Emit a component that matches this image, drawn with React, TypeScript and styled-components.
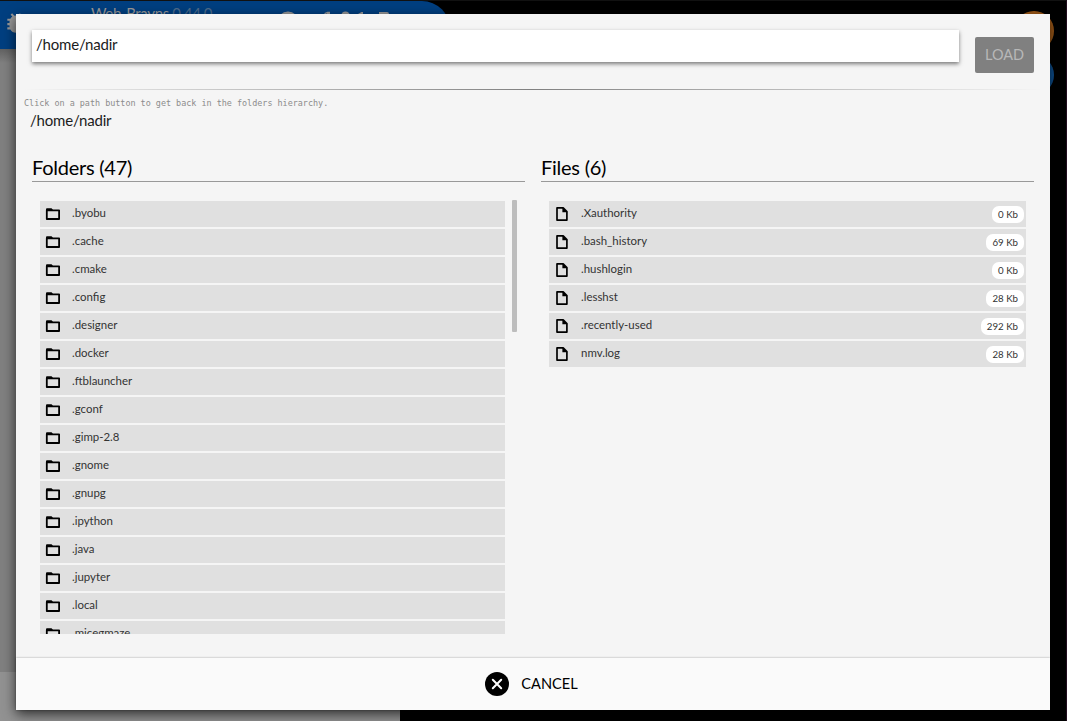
import React from "react";
import styled, { createGlobalStyle } from "styled-components";

const Global = createGlobalStyle`
  * { box-sizing: border-box; }
  html, body, #root { margin: 0; height: 100%; }
  body { background: #000; overflow: hidden; font-family: Lato, "Open Sans", sans-serif; color: #000; }
`;

const Desktop = styled.div`
  position: relative;
  width: 1067px;
  height: 721px;
  overflow: hidden;
  background: #000;
  border-top: 1px solid #111;
  border-right: 1px solid #1f0b1c;
  padding: 13px 16px 10px 16px;
`;

const Sidebar = styled.div`
  position: absolute;
  left: 0;
  top: 48px;
  width: 400px;
  height: 672px;
  background: linear-gradient(#626262, #808080 14px, #808080 623px, #929292 623px);
`;

const TopBar = styled.div`
  position: absolute;
  left: 0;
  top: 0;
  width: 450px;
  height: 48px;
  border-radius: 0 28px 0 0;
  background: #003f80;
  color: #999;
`;

const AppTitle = styled.div`
  position: absolute;
  left: 91px;
  top: 3px;
  font-size: 15px;
  line-height: 18px;
  letter-spacing: -0.35px;
  white-space: nowrap;
  span { opacity: 0.5; }
`;

const BugIcon = styled.svg`
  position: absolute;
  left: 3px;
  top: 9px;
`;

const ToolIcons = styled.svg`
  position: absolute;
  left: 276px;
  top: 9px;
`;

const Orb = styled.div<{ $top: number; $color: string }>`
  position: absolute;
  left: 1014px;
  top: ${(p) => p.$top}px;
  width: 40px;
  height: 40px;
  border-radius: 50%;
  background: ${(p) => p.$color};
`;

const Dialog = styled.div`
  position: relative;
  width: 1034px;
  height: 696px;
  display: flex;
  flex-direction: column;
  background: #f5f5f5;
  box-shadow: 0 4px 12px rgba(0, 0, 0, 0.7);
`;

const Body = styled.div`
  flex: 1;
  min-height: 0;
  display: flex;
  flex-direction: column;
`;

const PathForm = styled.div`
  display: flex;
  padding: 16px 16px 0;
  height: 75px;
  gap: 16px;
`;

const PathInput = styled.div`
  flex: 1;
  height: 32px;
  padding: 4px;
  background: #fff;
  box-shadow: 0 2px 4px rgba(0, 0, 0, 0.5);
  color: #1c1c1c;
  font-size: 15px;
  line-height: 21px;
  letter-spacing: -0.2px;
`;

const LoadButton = styled.div`
  width: 59px;
  height: 36px;
  margin-top: 7px;
  border-radius: 2px;
  background: #808080;
  color: #b8b8b8;
  font-size: 14.500px;
  line-height: 35px;
  text-align: center;
`;

const Divider = styled.div`
  height: 1px;
  margin: 0 8px;
  background: linear-gradient(90deg, transparent, #808080 50%, transparent);
`;

const Hint = styled.div`
  height: 17px;
  padding: 6px 8px 0;
  color: #8c8c8c;
  font-family: "DejaVu Sans Mono", monospace;
  font-size: 8.43px;
  line-height: 14px;
  white-space: nowrap;
`;

const Crumb = styled.div`
  height: 46px;
  padding: 3px 14px;
  color: #1c1c1c;
  font-size: 15px;
  line-height: 21px;
  letter-spacing: -0.2px;
`;

const Columns = styled.div`
  display: grid;
  grid-template-columns: 493px 493px;
  gap: 16px;
  padding: 0 16px;
`;

const Title = styled.div`
  height: 29px;
  border-bottom: 1px solid #999;
  font-size: 20px;
  line-height: 29px;
  letter-spacing: -0.25px;
`;

const Scroller = styled.div`
  height: 434px;
  margin-top: 18px;
  padding: 1px 8px 0;
  overflow: hidden;
  display: flex;
  gap: 7px;
`;

const List = styled.div`
  flex: 1;
  display: flex;
  flex-direction: column;
  gap: 2px;
`;

const Thumb = styled.div`
  width: 5px;
  height: 132px;
  margin-top: -1px;
  border-radius: 1px;
  background: #bdbdbd;
`;

const Row = styled.div`
  flex: none;
  height: 26px;
  display: flex;
  align-items: center;
  padding: 0 2px 0 5px;
  background: #e0e0e0;
  color: #333;
`;

const Name = styled.span`
  flex: 1;
  margin-left: 11px;
  font-size: 11.45px;
  line-height: 24px;
  height: 26px;
`;

const Size = styled.span`
  height: 17px;
  padding: 0 6px;
  border-radius: 7px;
  background: #fff;
  font-size: 9.7px;
  line-height: 16px;
`;

const Footer = styled.div`
  position: relative;
  height: 52px;
  display: flex;
  align-items: center;
  justify-content: center;
  gap: 12px;
  padding-right: 3px;
  background: #fafafa;
  box-shadow: 0 0 2px rgba(0, 0, 0, 0.35);
  font-size: 14.6px;
  line-height: 18px;
  span { margin-top: -1px; }
`;

const FolderIcon = () => (
  <svg width="16" height="16" viewBox="0 0 16 16">
    <path d="M1.8 4.3h12.3v8.7H1.8z" fill="none" stroke="#000" strokeWidth="1.8" strokeLinejoin="round" />
    <path d="M1 4.8V3.3Q1 2.200 2 2.200h4.500l1.500 1.500v1z" fill="#000" />
  </svg>
);

const FileIcon = () => (
  <svg width="16" height="16" viewBox="0 0 16 16">
    <path d="M3 1.9h6.2l3.7 3.7v8.5H3z" fill="none" stroke="#000" strokeWidth="1.7" strokeLinejoin="round" />
    <path d="M8.4 1.5v4.8h4.9z" fill="#000" />
  </svg>
);

const folders = [
  ".byobu", ".cache", ".cmake", ".config", ".designer", ".docker", ".ftblauncher", ".gconf",
  ".gimp-2.8", ".gnome", ".gnupg", ".ipython", ".java", ".jupyter", ".local", ".micegmaze",
];

const files = [
  { name: ".Xauthority", size: "0 Kb" },
  { name: ".bash_history", size: "69 Kb" },
  { name: ".hushlogin", size: "0 Kb" },
  { name: ".lesshst", size: "28 Kb" },
  { name: ".recently-used", size: "292 Kb" },
  { name: "nmv.log", size: "28 Kb" },
];

export default function App() {
  return (
    <>
      <Global />
      <Desktop>
        <Sidebar />
        <TopBar>
          <BugIcon width="26" height="26" viewBox="0 0 24 24" fill="#999">
            <path d="M20 8h-2.800a6 6 0 0 0-1.800-2L17 4.400 15.600 3l-2.200 2.200a6 6 0 0 0-2.800 0L8.400 3 7 4.400 8.600 6a6 6 0 0 0-1.800 2H4v2h2.100L6 11v1H4v2h2v1l.1 1H4v2h2.800a6 6 0 0 0 10.400 0H20v-2h-2.100l.1-1v-1h2v-2h-2v-1l-.1-1H20z" />
          </BugIcon>
          <AppTitle>Web-Brayns <span>0.44.0</span></AppTitle>
          <ToolIcons width="120" height="20" viewBox="0 0 120 20" fill="#999">
            <circle cx="12" cy="12" r="10.500" />
            <path d="M44 4h3v7h-3zM48.500 3l3-1.200h2.500v9h-3V3.500l-2.500.8zM82 4l3.500-2H87v9h-3V4.500zM103 2h8q2 0 2 2v9h-2V4h-8z" />
            <circle cx="69.500" cy="6" r="4.500" />
          </ToolIcons>
        </TopBar>
        <Orb $top={10} $color="#a05a18" />
        <Orb $top={54} $color="#0d4f90" />
        <Dialog>
          <Body>
            <PathForm>
              <PathInput>/home/nadir</PathInput>
              <LoadButton>LOAD</LoadButton>
            </PathForm>
            <Divider />
            <Hint>Click on a path button to get back in the folders hierarchy.</Hint>
            <Crumb>/home/nadir</Crumb>
            <Columns>
              <div>
                <Title>Folders (47)</Title>
                <Scroller>
                  <List>
                    {folders.map((name) => (
                      <Row key={name}><FolderIcon /><Name>{name}</Name></Row>
                    ))}
                  </List>
                  <Thumb />
                </Scroller>
              </div>
              <div>
                <Title>Files (6)</Title>
                <Scroller>
                  <List>
                    {files.map(({ name, size }) => (
                      <Row key={name}><FileIcon /><Name>{name}</Name><Size>{size}</Size></Row>
                    ))}
                  </List>
                </Scroller>
              </div>
            </Columns>
          </Body>
          <Footer>
            <svg width="24" height="24" viewBox="0 0 24 24">
              <circle cx="12" cy="12" r="12" fill="#000" />
              <path d="M7.800 7.800l8.400 8.400M16.200 7.800l-8.400 8.400" stroke="#fff" strokeWidth="2" strokeLinecap="round" />
            </svg>
            <span>CANCEL</span>
          </Footer>
        </Dialog>
      </Desktop>
    </>
  );
}
